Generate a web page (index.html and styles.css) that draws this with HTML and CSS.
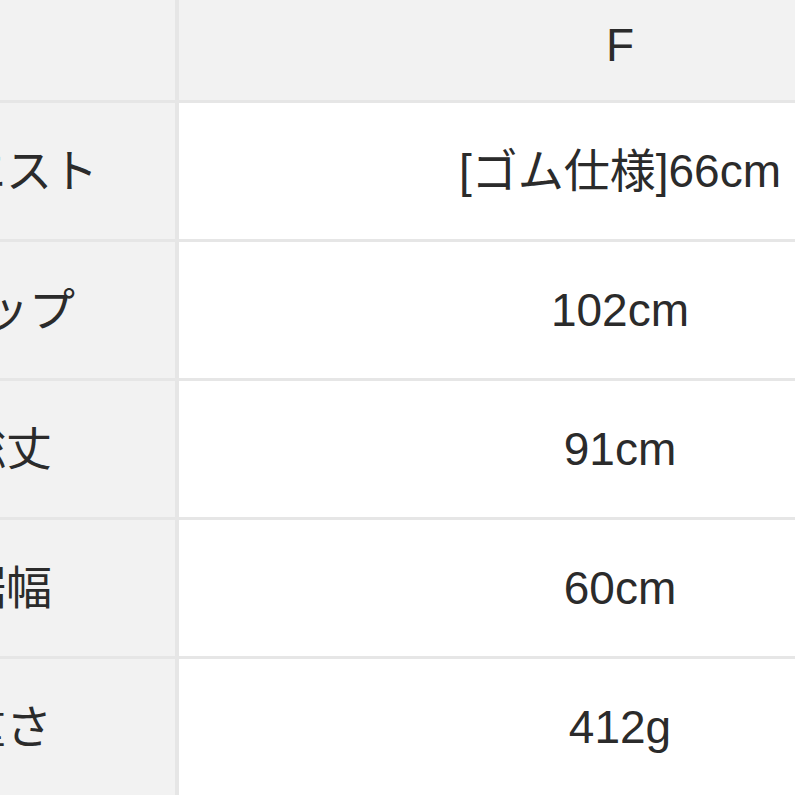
FILE: index.html
```html
<!DOCTYPE html>
<html lang="ja">
<head>
<meta charset="utf-8">
<title>サイズ表</title>
<link rel="stylesheet" href="styles.css">
</head>
<body>
<div class="size-table">
  <div class="cell head label"></div>
  <div class="cell head value">F</div>
  <div class="cell label">ウエスト</div>
  <div class="cell value">[ゴム仕様]66cm</div>
  <div class="cell label">ヒップ</div>
  <div class="cell value">102cm</div>
  <div class="cell label">総丈</div>
  <div class="cell value">91cm</div>
  <div class="cell label">裾幅</div>
  <div class="cell value">60cm</div>
  <div class="cell label">重さ</div>
  <div class="cell value">412g</div>
</div>
</body>
</html>
```
FILE: styles.css
```css
html, body {
  margin: 0;
  padding: 0;
  background: #ffffff;
  overflow: hidden;
  width: 795px;
  height: 795px;
}
.size-table {
  display: grid;
  grid-template-columns: 350px 882px;
  grid-template-rows: 100px repeat(5, 136px);
  column-gap: 4px;
  row-gap: 3px;
  margin-left: -175px;
  width: 1236px;
  background: #e6e6e6;
  font-family: "Liberation Sans", "Noto Sans CJK JP", sans-serif;
  font-size: 46px;
  line-height: 1;
  color: #2b2b2b;
}
.cell {
  display: flex;
  align-items: center;
  justify-content: center;
  white-space: nowrap;
}
.label, .head {
  background: #f2f2f2;
}
.label {
  padding-left: 12px;
}
.head {
  padding-bottom: 10px;
}
.value {
  background: #ffffff;
}
.head.value {
  background: #f2f2f2;
}
```
